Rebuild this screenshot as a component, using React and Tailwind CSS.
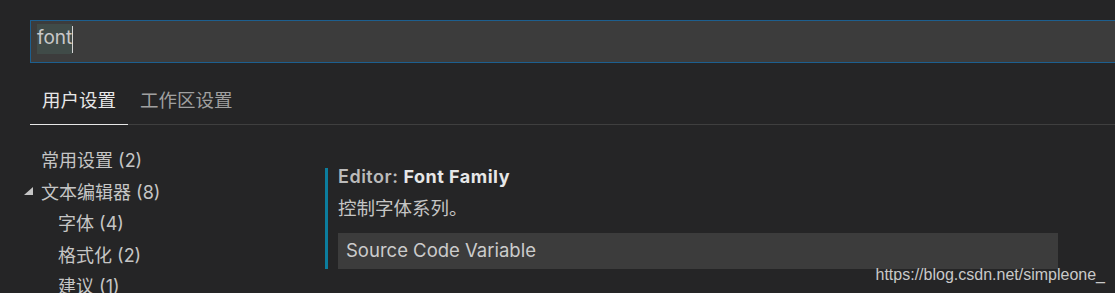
import React from 'react';

const navItems = [
  { label: '常用设置 (2)', level: 0 },
  { label: '文本编辑器 (8)', level: 0, open: true },
  { label: '字体 (4)', level: 1 },
  { label: '格式化 (2)', level: 1 },
  { label: '建议 (1)', level: 1 },
];

function Twisty() {
  return (
    <svg width="9" height="8" viewBox="0 0 9 8" className="mb-[3px]">
      <polygon points="9,0 9,8 0,8" fill="#c5c5c5" />
    </svg>
  );
}

export default function App() {
  return (
    <div
      className="relative h-[293px] w-full overflow-hidden bg-[#252526] text-[#cccccc]"
      style={{ fontFamily: 'Inter, "Noto Sans CJK SC", sans-serif' }}
    >
      {/* Search */}
      <div className="pt-[20px] pl-[30px]">
        <div className="flex h-[43px] w-[1120px] items-start border border-[#1d5f8f] bg-[#3c3c3c] pt-[3px] pl-[6px]">
          <span className="inline-block h-[30px] bg-[#404b48] text-[19px] leading-[27px] text-[#c8c8c8]">font</span>
          <span className="mt-[2px] h-[27px] w-px bg-[#d4d4d4]" />
        </div>
      </div>

      {/* Tabs */}
      <div className="mt-[17px] ml-[30px] flex border-b border-[#3f3f3f] text-[18.5px] leading-[26px]">
        <div className="-mb-px border-b border-[#e7e7e7] px-[12px] pt-[7px] pb-[11px] text-[#e7e7e7]">用户设置</div>
        <div className="px-[12px] pt-[7px] pb-[11px] text-[#a0a0a0]">工作区设置</div>
      </div>

      {/* Body */}
      <div className="flex pt-[20px]">
        <nav className="w-[325px] shrink-0 text-[18px] text-[#c5c5c5]">
          {navItems.map((item) => (
            <div
              key={item.label}
              className={`flex h-[31.5px] items-center ${item.level === 1 ? 'pl-[58px]' : item.open ? 'pl-[24px]' : 'pl-[41px]'}`}
            >
              {item.open && (
                <span className="flex w-[17px] items-center">
                  <Twisty />
                </span>
              )}
              <span>{item.label}</span>
            </div>
          ))}
        </nav>

        <section className="pt-[23px]">
          <div className="border-l-[3px] border-[#0c7d9d] pl-[10px]">
            <div className="text-[18px] leading-[18px] tracking-[0.5px]">
              <span className="font-semibold text-[#bbbbbb]">Editor: </span>
              <span className="font-bold text-[#e7e7e7]">Font Family</span>
            </div>
            <div className="mt-[11px] text-[18.5px] leading-[22px] text-[#c5c5c5]">控制字体系列。</div>
            <div className="mt-[14px] flex h-[36px] w-[720px] items-center bg-[#3c3c3c] pl-[8px] text-[18.5px] text-[#cccccc]">
              Source Code Variable
            </div>
          </div>
        </section>
      </div>

      <div
        className="absolute top-[266px] right-[10px] text-[16px] leading-[18px] text-[#c9c9c9]"
        style={{ fontFamily: '"Liberation Sans", Arial, sans-serif' }}
      >
        https://blog.csdn.net/simpleone_
      </div>
    </div>
  );
}
